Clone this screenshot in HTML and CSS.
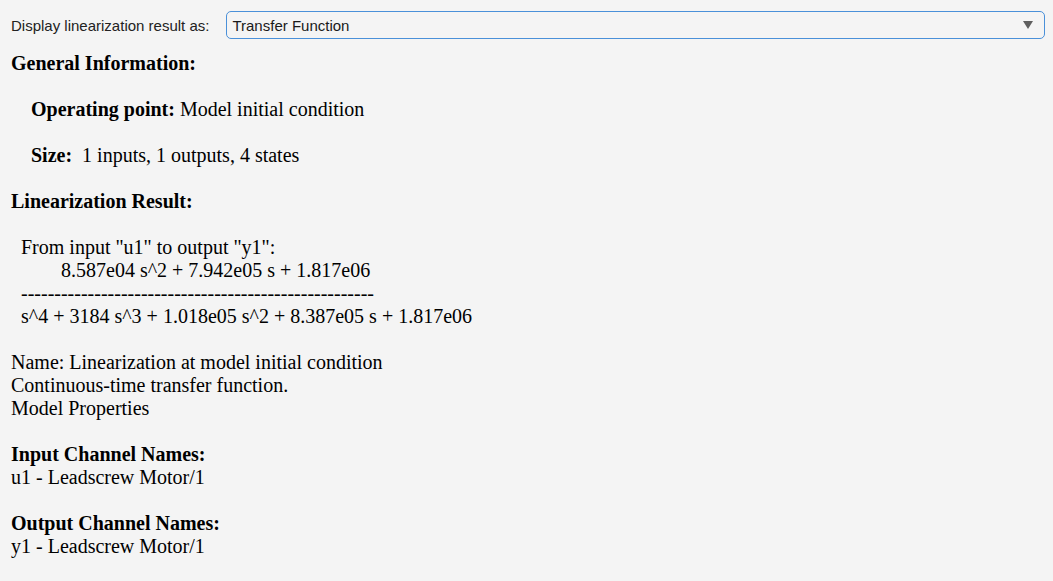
FILE: index.html
```html
<!DOCTYPE html>
<html>
<head>
<meta charset="utf-8">
<link rel="stylesheet" href="styles.css">
</head>
<body>
<div class="toolbar">
  <span class="label">Display linearization result as:</span>
  <div class="select">
    <span class="select-text">Transfer Function</span>
    <svg class="arrow" width="10" height="8" viewBox="0 0 10 8"><path d="M0 0 L10 0 L5 8 Z" fill="#5f5f5f"/></svg>
  </div>
</div>
<div class="report">
  <div class="para heading">General Information:</div>
  <div class="para indent"><b>Operating point:</b> Model initial condition</div>
  <div class="para indent"><b>Size:</b>  1 inputs, 1 outputs, 4 states</div>
  <div class="para heading">Linearization Result:</div>
  <div class="para tf">  From input "u1" to output "y1":
          8.587e04 s^2 + 7.942e05 s + 1.817e06
  -----------------------------------------------------
  s^4 + 3184 s^3 + 1.018e05 s^2 + 8.387e05 s + 1.817e06</div>
  <div class="para">Name: Linearization at model initial condition<br>Continuous-time transfer function.<br>Model Properties</div>
  <div class="para"><div class="heading">Input Channel Names:</div>u1 - Leadscrew Motor/1</div>
  <div class="para"><div class="heading">Output Channel Names:</div>y1 - Leadscrew Motor/1</div>
</div>
</body>
</html>
```

FILE: styles.css
```css
html, body {
  margin: 0;
  padding: 0;
  background: #f4f4f4;
}
body {
  width: 1053px;
  height: 581px;
  overflow: hidden;
}
.toolbar {
  display: flex;
  align-items: center;
  padding: 11px 8px 0 11px;
  margin-bottom: 13px;
  font-family: "Liberation Sans", Arial, sans-serif;
  font-size: 15px;
  color: #222;
}
.label {
  margin-right: 17px;
}
.select {
  flex: 1;
  height: 28px;
  box-sizing: border-box;
  border: 1px solid #4a90d9;
  border-radius: 5px;
  display: flex;
  align-items: center;
  justify-content: space-between;
  padding: 0 11px 0 5px;
  color: #1a1a1a;
}
.arrow {
  display: block;
}
.report {
  padding: 0 11px;
  font-family: "Liberation Serif", "Times New Roman", serif;
  font-size: 20px;
  line-height: 23px;
  color: #000;
}
.para {
  margin-bottom: 23px;
}
.heading {
  font-weight: bold;
}
.indent {
  white-space: pre;
  padding-left: 20px;
}
.tf {
  white-space: pre;
}
```
